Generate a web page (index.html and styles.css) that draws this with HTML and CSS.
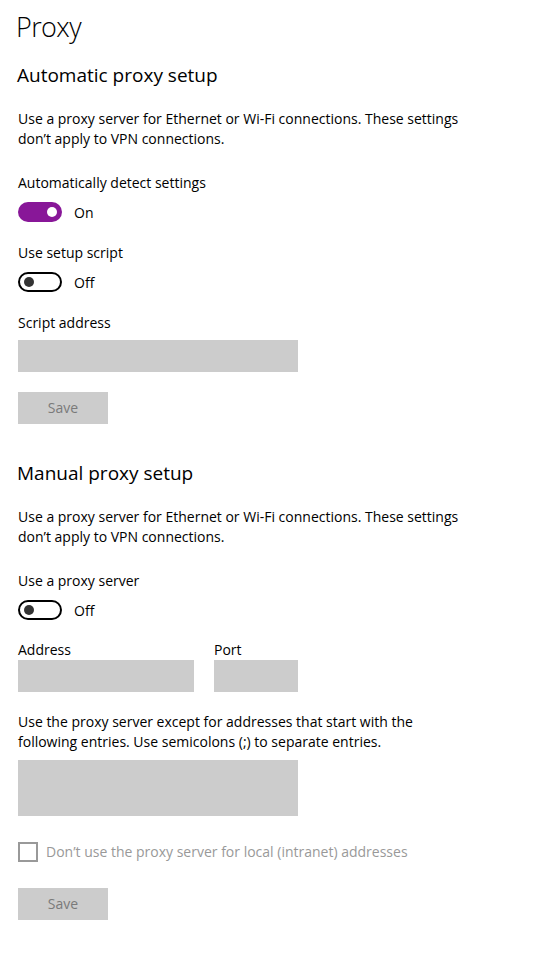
FILE: index.html
```html
<!DOCTYPE html>
<html lang="en">
<head>
<meta charset="utf-8">
<title>Proxy</title>
<link rel="stylesheet" href="styles.css">
</head>
<body>
<main class="page">
  <h1 class="title">Proxy</h1>

  <h2 class="heading heading-first">Automatic proxy setup</h2>
  <p class="para para-first">Use a proxy server for Ethernet or Wi-Fi connections. These settings don’t apply to VPN connections.</p>

  <div class="label label-a">Automatically detect settings</div>
  <div class="toggle-row">
    <span class="toggle toggle-on"><span class="knob"></span></span>
    <span class="toggle-text">On</span>
  </div>

  <div class="label label-b">Use setup script</div>
  <div class="toggle-row">
    <span class="toggle toggle-off"><span class="knob"></span></span>
    <span class="toggle-text">Off</span>
  </div>

  <div class="label label-b">Script address</div>
  <div class="input input-wide input-after-label"></div>
  <div class="button button-first">Save</div>

  <h2 class="heading heading-second">Manual proxy setup</h2>
  <p class="para para-second">Use a proxy server for Ethernet or Wi-Fi connections. These settings don’t apply to VPN connections.</p>

  <div class="label label-a">Use a proxy server</div>
  <div class="toggle-row">
    <span class="toggle toggle-off"><span class="knob"></span></span>
    <span class="toggle-text">Off</span>
  </div>

  <div class="addr-row">
    <div class="field">
      <div class="label">Address</div>
      <div class="input input-address"></div>
    </div>
    <div class="field">
      <div class="label">Port</div>
      <div class="input input-port"></div>
    </div>
  </div>

  <p class="para para-third">Use the proxy server except for addresses that start with the following entries. Use semicolons (;) to separate entries.</p>
  <div class="input input-wide textarea"></div>

  <div class="check-row">
    <span class="checkbox"></span>
    <span class="check-text">Don’t use the proxy server for local (intranet) addresses</span>
  </div>

  <div class="button button-second">Save</div>
</main>
</body>
</html>
```

FILE: styles.css
```css
html, body {
  margin: 0;
  padding: 0;
  background: #ffffff;
}

body {
  font-family: "Open Sans", "Noto Sans", "Liberation Sans", sans-serif;
  color: #000000;
  font-size: 14px;
  line-height: 20px;
}

.page {
  padding: 0 0 0 18px;
  display: flex;
  flex-direction: column;
  align-items: flex-start;
}

.title {
  margin: 7px 0 0 -2px;
  font-size: 27px;
  font-weight: 300;
  line-height: 40px;
  letter-spacing: -0.6px;
}

.heading {
  margin: 0 0 0 -1px;
  font-size: 19px;
  font-weight: 400;
  line-height: 28px;
}

.heading-first { margin-top: 14px; }
.heading-second { margin-top: 35px; }

.para {
  margin: 0;
  width: 466px;
}

.para-first { margin-top: 20px; }
.para-second { margin-top: 20px; }
.para-third { margin-top: 20px; width: 440px; }

.label-a { margin-top: 24px; }
.label-b { margin-top: 21px; }

.toggle-row {
  margin-top: 9px;
  display: flex;
  align-items: center;
  gap: 12px;
  height: 20px;
}

.toggle {
  box-sizing: border-box;
  width: 44px;
  height: 20px;
  border-radius: 10px;
  display: flex;
  align-items: center;
}

.toggle-on {
  background: #881798;
  justify-content: flex-end;
  padding-right: 5px;
}

.toggle-on .knob {
  background: #ffffff;
}

.toggle-off {
  border: 2px solid #000000;
  justify-content: flex-start;
  padding-left: 4px;
}

.toggle-off .knob {
  background: #333333;
}

.knob {
  width: 10px;
  height: 10px;
  border-radius: 50%;
}

.toggle-text {
  line-height: 20px;
  position: relative;
  top: 1px;
}

.input {
  background: #cccccc;
  height: 32px;
}

.input-wide { width: 280px; }
.input-after-label { margin-top: 7px; }

.button {
  margin-top: 20px;
  width: 90px;
  height: 32px;
  background: #cccccc;
  color: #7a7a7a;
  display: flex;
  align-items: center;
  justify-content: center;
}

.button-second { margin-top: 26px; }

.addr-row {
  margin-top: 20px;
  display: flex;
  gap: 20px;
}

.input-address { width: 176px; }
.input-port { width: 84px; }

.textarea {
  margin-top: 8px;
  height: 56px;
}

.check-row {
  margin-top: 26px;
  display: flex;
  align-items: center;
  gap: 8px;
  height: 20px;
}

.checkbox {
  box-sizing: border-box;
  width: 20px;
  height: 20px;
  border: 2px solid #999999;
}

.check-text {
  color: #999999;
}
```
